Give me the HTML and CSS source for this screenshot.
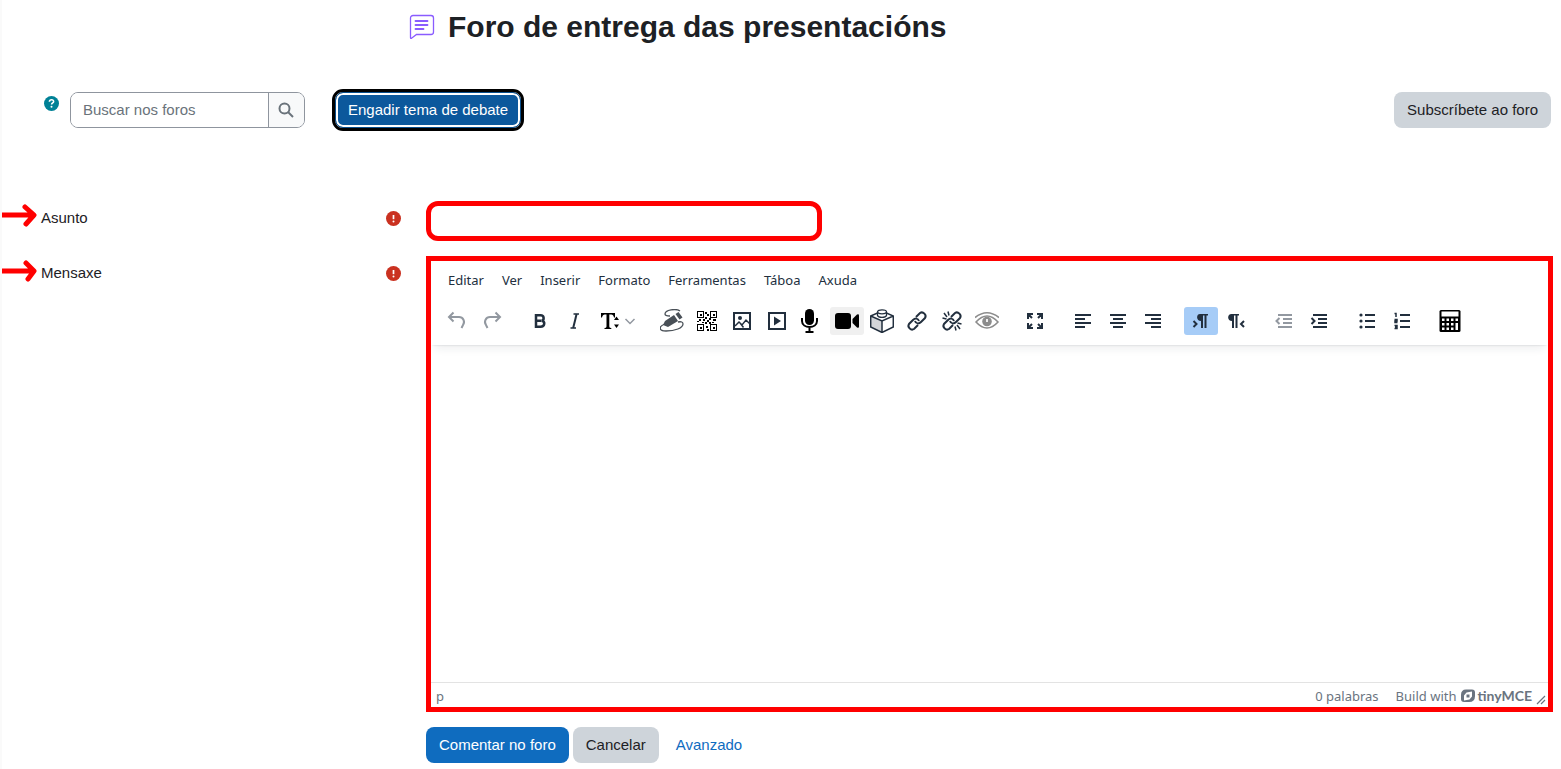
FILE: index.html
```html
<!DOCTYPE html>
<html lang="gl">
<head>
<meta charset="utf-8">
<meta name="viewport" content="width=device-width, initial-scale=1">
<title>Foro de entrega das presentacións</title>
<link rel="stylesheet" href="styles.css">
</head>
<body>
<header class="page-title">
  <svg class="forum-icon" viewBox="0 0 26 26" width="26" height="26" fill="none" stroke="#8a5cff"><path d="M4 1.500h18a2.500 2.500 0 0 1 2.500 2.500v14a2.500 2.500 0 0 1-2.500 2.500H7.500l-5 3.800q-1 .5-1-.7V4a2.500 2.500 0 0 1 2.500-2.500z" stroke-width="1.300"/><path d="M6.500 7h12M6.500 11h12M6.500 15h8" stroke-width="1.800" stroke-linecap="round"/></svg>
  <h1>Foro de entrega das presentacións</h1>
</header>
<main>
  <div class="actions">
    <button class="help" type="button" aria-label="Axuda coa busca"><svg viewBox="0 0 15 15" width="15" height="15"><circle cx="7.500" cy="7.500" r="7.500" fill="#008196"/><path d="M5.400 5.700c.2-2.700 4.500-2.500 4.200 0C9.500 7 7.600 7 7.600 8.500" fill="none" stroke="#fff" stroke-width="1.600"/><circle cx="7.500" cy="10.800" r="1" fill="#fff"/></svg></button>
    <form class="search">
      <input type="text" placeholder="Buscar nos foros" aria-label="Buscar nos foros">
      <button type="button" aria-label="Buscar"><svg viewBox="0 0 16 16" width="16" height="16" fill="none" stroke="#6a737b" stroke-width="2"><circle cx="6.500" cy="6.500" r="5"/><path d="M10 10l5 5"/></svg></button>
    </form>
    <button class="btn primary focused" type="button">Engadir tema de debate</button>
    <button class="btn secondary subscribe" type="button">Subscríbete ao foro</button>
  </div>

  <form class="post-form">
    <div class="row">
      <div class="label-cell">
        <svg class="arrow" viewBox="0 0 38 24" width="38" height="24"><path d="M-4 12h38M26 4l9 8-8 9" fill="none" stroke="#f00" stroke-width="5" stroke-linecap="round" stroke-linejoin="round"/></svg>
        <label for="subject">Asunto</label>
        <svg class="required" viewBox="0 0 15 15" width="15" height="15"><circle cx="7.500" cy="7.500" r="7.500" fill="#ca3120"/><path d="M7.500 4v4.200" stroke="#fff" stroke-width="1.700"/><circle cx="7.500" cy="10.500" r="1" fill="#fff"/></svg>
      </div>
      <input class="subject" id="subject" type="text">
    </div>
    <div class="row">
      <div class="label-cell">
        <svg class="arrow" viewBox="0 0 38 24" width="38" height="24"><path d="M-4 13h38M27 5l8 8-6 8" fill="none" stroke="#f00" stroke-width="5" stroke-linecap="round" stroke-linejoin="round"/></svg>
        <label for="message">Mensaxe</label>
        <svg class="required" viewBox="0 0 15 15" width="15" height="15"><circle cx="7.500" cy="7.500" r="7.500" fill="#ca3120"/><path d="M7.500 4v4.200" stroke="#fff" stroke-width="1.700"/><circle cx="7.500" cy="10.500" r="1" fill="#fff"/></svg>
      </div>
      <div class="editor">
        <div class="editor-header">
          <div class="menubar">
            <button type="button">Editar</button><button type="button">Ver</button><button type="button">Inserir</button><button type="button">Formato</button><button type="button">Ferramentas</button><button type="button">Táboa</button><button type="button">Axuda</button>
          </div>
          <div class="toolbar">
            <div class="group">
              <button type="button" class="dim" aria-label="Desfacer"><svg viewBox="0 0 24 24"><path d="M8.500 3.500L4 8l4.500 4.500M4.500 8H14a5 5 0 0 1 4 8l-1.500 3" class="line"/></svg></button>
              <button type="button" class="dim" aria-label="Refacer"><svg viewBox="0 0 24 24"><path d="M15.500 3.500L20 8l-4.500 4.500M19.500 8H10a5 5 0 0 0-4 8l1.500 3" class="line"/></svg></button>
            </div>
            <div class="group">
              <button type="button" aria-label="Grosa"><svg viewBox="0 0 24 24"><path d="M8 6.200h4.500c4 0 4 5 1 5.500 4 .5 3.600 6.100-1 6.100H8zM8 11.800h5" class="line bold"/></svg></button>
              <button type="button" aria-label="Cursiva"><svg viewBox="0 0 24 24"><path d="M10.500 5H16M7.500 19H13" class="line thin"/><path d="M13.600 5l-3.400 14" class="line"/></svg></button>
              <button type="button" class="size" aria-label="Tamaño da letra"><svg viewBox="0 0 24 24"><path d="M3 4h14v4.500h-1C15.500 6 14.500 5.500 11.300 5.500V17.500q0 1.500 2 1.500v1H6.500v-1q2 0 2-1.500V5.500C5.600 5.500 4.500 6 4 8.500H3zM16 11l2.500-3.500L21 11zM16 15.500l2.500 3.500L21 15.500z" fill="#000"/></svg><svg class="chevron" viewBox="0 0 12 12"><path d="M1.500 4L6 8.500 10.500 4" class="line thin"/></svg></button>
            </div>
            <div class="group">
              <button type="button" aria-label="Debuxo"><svg viewBox="0 0 24 24" fill="#495057"><path d="M3 16l2-4 9-6 4 6-10 6z"/><path d="M15.500 5l3-2 4 5.500-3 2z"/><path d="M20 2C16-1 5 1 5 5q0 2 5 2M5 15c-6 2-7 7 1 7 9 0 17-3 17-7q0-3-5-2" fill="none" stroke="#495057" stroke-width="1.300"/></svg></button>
              <button type="button" aria-label="Código QR"><svg viewBox="0 0 24 24" shape-rendering="crispEdges" fill="none" stroke="#000" stroke-width="1"><path d="M2.500 2.500h6v6h-6zM15.500 2.500h6v6h-6zM2.500 15.500h6v6h-6zM15.500 15.500h6v6h-6z"/><path d="M4.500 5.500h2M17.500 5.500h2M4.500 18.500h2M17.500 18.500h2" stroke-width="2"/><path d="M10 3h2v2h-2zM12 5h2v2h-2zM10 8h2v2h-2zM8 10h2v2H8zM4 10h2v2H4zM2 12h2v1H2zM12 11h2v2h-2zM14 9h2v2h-2zM18 10h3v2h-3zM10 13h2v2h-2zM14 13h2v2h-2zM17 13h2v1h-2zM7 13h2v1H7zM11 17h2v2h-2zM12 20h2v2h-2z" fill="#000" stroke="none"/></svg></button>
              <button type="button" aria-label="Imaxe"><svg viewBox="0 0 24 24"><path d="M5 17l4-4 3 3 4-5 4 4M10.500 14.500l3 4" class="line thin"/><path d="M4 4h16v16H4z" class="line"/><circle cx="10" cy="9" r="2"/></svg></button>
              <button type="button" aria-label="Multimedia"><svg viewBox="0 0 24 24"><path d="M4 4h16v16H4z" class="line"/><path d="M9 7.500l7 4.500-7 4.500z"/></svg></button>
              <button type="button" aria-label="Gravar audio"><svg viewBox="3 0 24 24" fill="#000"><rect x="8" y="0" width="9" height="16" rx="4.500"/><path d="M5 9v3c0 8 15 8 15 0V9M12.500 18v4M8.500 23h8" fill="none" stroke="#000" stroke-width="2"/></svg></button>
              <button type="button" class="hover" aria-label="Gravar vídeo"><svg viewBox="0 0 24 24" fill="#000"><rect y="4" width="16" height="16" rx="3"/><path d="M17.500 10L22 5.500q2-1 2 1v11q0 2-2 1L17.500 14z"/></svg></button>
              <button type="button" aria-label="H5P"><svg viewBox="0 0 24 24"><path d="M.7 7L12 12v11.500L.7 18z" fill="#d3d5d9"/><path d="M.7 7L12 2l11.300 5v11L12 23.500.7 18zM.7 7L12 12l11.300-5M12 12v11.500" class="line thin"/><path d="M7.500 3v3.500c1 2.500 8 2.500 9 0V3" fill="#fff" stroke="#222f3e" stroke-width="1.300"/><ellipse cx="12" cy="2.800" rx="4.500" ry="2" fill="#fff" stroke="#222f3e" stroke-width="1.300"/></svg></button>
              <button type="button" aria-label="Ligazón"><svg viewBox="0 0 24 24"><path d="M11 8l4-4c3-2 7 2 5 5l-4 4c-2 2-5 2-6-1M13 16l-4 4c-3 2-7-2-5-5l4-4c2-2 5-2 6 1" class="line"/></svg></button>
              <button type="button" aria-label="Retirar ligazón"><svg viewBox="0 0 24 24"><path d="M11 8l4-4c3-2 7 2 5 5l-4 4c-2 2-5 2-6-1M13 16l-4 4c-3 2-7-2-5-5l4-4c2-2 5-2 6 1" class="line"/><path d="M8 2.500l1 4M4 4l3 4M2.500 9l4 1M16 21.500l-1-4M20 20l-3-4M21.500 15l-4-1" class="line thin"/></svg></button>
              <button type="button" aria-label="Vista previa"><svg viewBox="0 0 24 24" fill="#8c8c8c"><path d="M1 13Q12 1 23 13 12 25 1 13zM0 8.500Q12-1 24 8.500" fill="none" stroke="#8c8c8c" stroke-width="1.600"/><circle cx="12" cy="12.500" r="4.800"/><path d="M11 10h2v3h-2z" fill="#eee"/></svg></button>
            </div>
            <div class="group">
              <button type="button" aria-label="Pantalla completa"><svg viewBox="0 0 24 24"><path d="M10 5H5v5M5 5l4 4M14 5h5v5M19 5l-4 4M5 14v5h5M5 19l4-4M19 14v5h-5M19 19l-4-4" class="line"/></svg></button>
            </div>
            <div class="group">
              <button type="button" aria-label="Aliñar á esquerda"><svg viewBox="0 0 24 24"><path d="M4 6h16M4 10h10M4 14h16M4 18h10" class="line"/></svg></button>
              <button type="button" aria-label="Centrar"><svg viewBox="0 0 24 24"><path d="M4 6h16M7 10h10M4 14h16M7 18h10" class="line"/></svg></button>
              <button type="button" aria-label="Aliñar á dereita"><svg viewBox="0 0 24 24"><path d="M4 6h16M10 10h10M4 14h16M10 18h10" class="line"/></svg></button>
            </div>
            <div class="group">
              <button type="button" class="active" aria-label="De esquerda a dereita"><svg viewBox="0 0 24 24"><path d="M11 5h8v1.500h-1.500V19h-2V6.500H14V19h-2v-7c-5 0-5-7-1-7z"/><path d="M4.500 12l3 3-3 3" class="line"/></svg></button>
              <button type="button" aria-label="De dereita a esquerda"><svg viewBox="0 0 24 24"><path d="M7.500 5H15v1.500h-1.500V19h-2V6.500H10V19H8v-7c-5 0-5-7-.5-7z"/><path d="M20 12l-3 3 3 3" class="line"/></svg></button>
            </div>
            <div class="group">
              <button type="button" class="dim" aria-label="Reducir sangría"><svg viewBox="0 0 24 24"><path d="M6 6h14M11 10h9M11 14h9M6 18h14M7.500 9L4.500 12l3 3" class="line"/></svg></button>
              <button type="button" aria-label="Aumentar sangría"><svg viewBox="0 0 24 24"><path d="M6 6h14M11 10h9M11 14h9M6 18h14M4.500 9l3 3-3 3" class="line"/></svg></button>
            </div>
            <div class="group">
              <button type="button" aria-label="Lista"><svg viewBox="0 0 24 24"><path d="M10 6h10M10 12h10M10 18h10" class="line"/><circle cx="6" cy="6" r="1.600"/><circle cx="6" cy="12" r="1.600"/><circle cx="6" cy="18" r="1.600"/></svg></button>
              <button type="button" aria-label="Lista numerada"><svg viewBox="0 0 24 24"><path d="M10 6h10M10 12h10M10 18h10" class="line"/><path d="M4.500 4.600H6V8M4.500 10.500H7V12H5v1.600h2.500M4.500 16.500H7v3H4.500M5 18h2" class="line thin"/></svg></button>
            </div>
            <div class="group">
              <button type="button" aria-label="Ecuación"><svg viewBox="0 0 24 24"><rect x="1.500" y="1" width="21" height="22" rx="1.500" fill="#000"/><path d="M3.500 2.500h17v5h-17zM4 9.500h2.500v2.500H4zM8.500 9.500H11V12H8.500zM13 9.500h2.500V12H13zM17.500 9.500H20V12h-2.500zM4 14h2.500v2.500H4zM8.500 14H11v2.500H8.500zM13 14h2.500v2.500H13zM17.500 14H20v7h-2.500zM4 18.500h2.500V21H4zM8.500 18.500H11V21H8.500zM13 18.500h2.500V21H13z" fill="#fff"/></svg></button>
            </div>
          </div>
        </div>
        <textarea id="message"></textarea>
        <div class="statusbar">
          <span class="path">p</span>
          <span>0 palabras</span>
          <a class="brand" href="#">Build with <svg viewBox="0 0 14 14" width="14" height="14"><path d="M5 .5h6Q14 .5 14 3.500V7q0 6-6 6H3q-3 0-3-3V6Q0 .5 5 .5z" fill="#6a7480"/><path d="M5.500 3.500L11 2.500v5L8.500 10.500 3 11.500v-5zM5.500 5.500v3h3v-3z" fill="#fff" fill-rule="evenodd"/></svg><strong>tinyMCE</strong></a>
          <svg class="grip" viewBox="0 0 10 10" width="10" height="10"><path d="M1 9l8-8M5 9l4-4" stroke="#6a7480" stroke-width="1.200"/></svg>
        </div>
      </div>
    </div>
    <div class="form-buttons">
      <button class="btn primary" type="button">Comentar no foro</button>
      <button class="btn secondary" type="button">Cancelar</button>
      <a href="#">Avanzado</a>
    </div>
  </form>
</main>
</body>
</html>
```
FILE: styles.css
```css
* { box-sizing: border-box; }
body {
  margin: 0;
  min-height: 100vh;
  border-left: 2px solid #fafafa;
  background: #fff;
  color: #1d2125;
  font: 15px/22px "Liberation Sans", Arial, sans-serif;
}
button, input, textarea { font: inherit; color: inherit; margin: 0; }
button { cursor: pointer; }
svg { display: block; flex: none; }
a { color: #0f6cbf; text-decoration: none; }

.page-title {
  display: flex;
  align-items: center;
  gap: 13px;
  padding: 9px 10px 0 407px;
}
h1 { margin: 0; font-size: 30px; line-height: 36px; }
main { padding: 47px 10px 0 39px; }

.actions { display: flex; align-items: center; }
.help { align-self: flex-start; margin: 4px 11px 0 3px; padding: 0; border: 0; background: none; }
.search {
  display: flex;
  width: 235px;
  height: 36px;
  margin-right: 30px;
  border: 1px solid #8f959e;
  border-radius: 8px;
  overflow: hidden;
}
.search input { flex: 1; min-width: 0; padding: 0 12px; border: 0; }
.search input::placeholder { color: #6a737b; opacity: 1; }
.search button {
  width: 36px;
  padding: 0 9px;
  border: 0;
  border-left: 1px solid #8f959e;
  background: #f8f9fa;
}

.btn { height: 36px; padding: 0 12px; border: 1px solid transparent; border-radius: 8px; }
.primary { background: #0f6cbf; color: #fff; }
.secondary { background: #ced4da; color: #1d2125; }
.focused {
  border-color: #0a4e8b;
  background: #0c589c;
  outline: 3px solid #000;
  box-shadow: inset 0 0 0 2px #fff;
}
.subscribe { margin-left: auto; }

.post-form { padding-top: 73px; }
.row { display: grid; grid-template-columns: 360px minmax(0, 1fr); column-gap: 25px; margin-bottom: 15px; }
.label-cell {
  position: relative;
  display: flex;
  align-items: center;
  justify-content: space-between;
  align-self: start;
  padding-top: 6px;
}
.arrow { position: absolute; left: -42px; top: 2px; overflow: visible; }
.subject {
  width: 396px;
  max-width: 100%;
  height: 40px;
  padding: 0 12px;
  border: 5px solid #f00;
  border-radius: 12px;
}

.editor {
  display: flex;
  flex-direction: column;
  min-height: 456px;
  margin-right: -2px;
  border: 5px solid #f00;
  color: #222f3e;
  font: 13px/20px "Noto Sans", sans-serif;
}
.editor-header {
  padding: 8px 9px 10px;
  box-shadow: 0 2px 2px -2px rgba(34, 47, 62, .2), 0 8px 8px -4px rgba(34, 47, 62, .07);
}
.menubar { display: flex; gap: 2px; padding-bottom: 16px; }
.menubar button { height: 22px; padding: 0 8px; border: 0; background: none; }
.toolbar { display: flex; flex-wrap: wrap; gap: 14px; }
.group { display: flex; gap: 1px; }
.group button {
  display: flex;
  align-items: center;
  justify-content: center;
  width: 34px;
  height: 28px;
  padding: 0;
  border: 0;
  border-radius: 3px;
  background: none;
}
.group svg { width: 24px; height: 24px; }
.group svg:not([fill]) { fill: currentColor; }
.group .line { fill: none; stroke: currentColor; stroke-width: 2; }
.group .thin { stroke-width: 1.500; }
.group .bold { stroke-width: 2.500; }
.group .dim { color: #9298a0; }
.group .active { background: #a6ccf7; }
.group .hover { background: #f0f0f0; }
.group .size { width: 48px; gap: 2px; }
.group .chevron { width: 12px; height: 12px; color: #9298a0; }
textarea { flex: 1; width: 100%; border: 0; outline: 0; padding: 16px; background: transparent; resize: none; }
.statusbar {
  display: flex;
  align-items: center;
  gap: 17px;
  height: 25px;
  padding: 1px 2px 0 5px;
  border-top: 1px solid #e3e3e3;
  color: #6a7480;
}
.path { margin-right: auto; }
.brand { display: flex; align-items: center; gap: 5px; color: inherit; }
.brand strong { margin-left: -3px; font: bold 14px/20px Lato, sans-serif; }
.grip { align-self: flex-end; margin: 0 0 2px -13px; }

.form-buttons { display: flex; align-items: center; gap: 4px; padding-left: 385px; }
.form-buttons a { padding: 0 13px; }

@media (max-width: 800px) {
  .page-title { padding-left: 20px; }
  .actions { flex-wrap: wrap; gap: 10px; }
  .row { grid-template-columns: minmax(0, 1fr); }
  .form-buttons { padding-left: 0; }
}
```
